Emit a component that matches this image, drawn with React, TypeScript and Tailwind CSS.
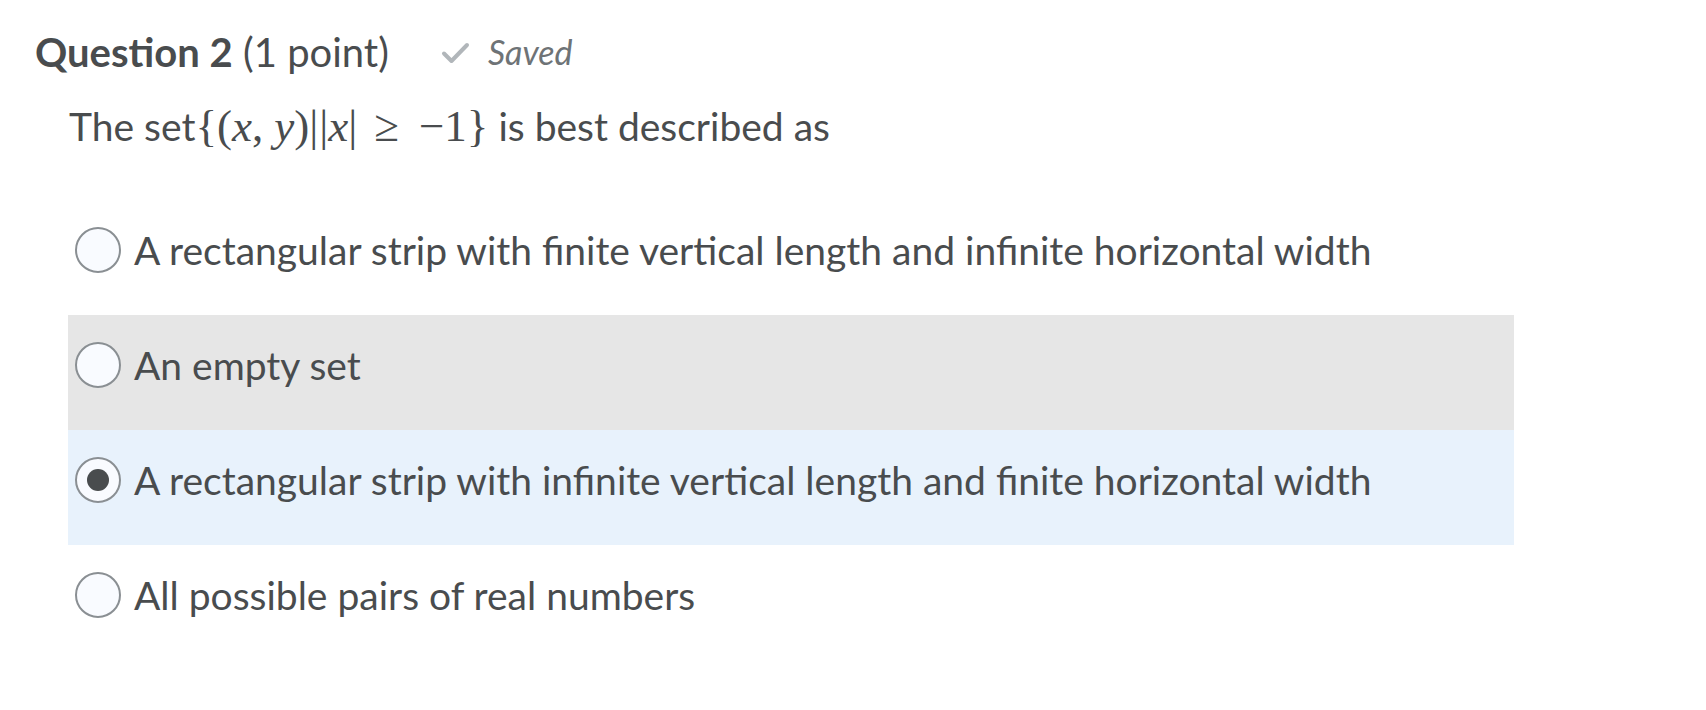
import React from 'react';

interface Choice {
  id: number;
  label: string;
  selected?: boolean;
  hovered?: boolean;
}

const choices: Choice[] = [
  { id: 1, label: 'A rectangular strip with finite vertical length and infinite horizontal width' },
  { id: 2, label: 'An empty set', hovered: true },
  { id: 3, label: 'A rectangular strip with infinite vertical length and finite horizontal width', selected: true },
  { id: 4, label: 'All possible pairs of real numbers' },
];

const Radio: React.FC<{ checked?: boolean }> = ({ checked }) => (
  <span className="flex h-[46px] w-[46px] shrink-0 items-center justify-center rounded-full border-2 border-[#8a8f93] bg-[#f9fbff]">
    {checked && <span className="h-[22px] w-[22px] rounded-full bg-[#494c4e]" />}
  </span>
);

// set-builder expression, laid out roughly like MathJax
const Math: React.FC = () => (
  <span className="text-[45px]" style={{ fontFamily: '"Liberation Serif", "DejaVu Serif", serif' }}>
    {'{'}(<i>x</i>,<span className="ml-[11px]" /><i>y</i>)|<span className="ml-[1px]" />|<i>x</i>|
    <span className="ml-[17px] mr-[20px]">≥</span>−1{'}'}
  </span>
);

export default function App() {
  return (
    <div className="min-h-[710px] bg-white text-[#494c4e]" style={{ fontFamily: 'Lato, "Open Sans", sans-serif' }}>
      <div className="flex items-center pl-[35px] pt-[27px] leading-[50px]">
        <h2 className="text-[40px]">
          <span className="font-bold">Question 2</span> (1 point)
        </h2>
        <div className="ml-[52px] flex items-center gap-[18px] text-[#6e7376]">
          <svg width="29" height="23" viewBox="0 0 29 23" fill="none">
            <path d="M3 12.5 L10.5 20 L26 4" stroke="#b1b6ba" strokeWidth="4" strokeLinecap="round" strokeLinejoin="round" />
          </svg>
          <span className="text-[34px] italic">Saved</span>
        </div>
      </div>

      <p className="ml-[69px] mt-[24px] text-[39px] leading-[50px]">
        The set<Math /> is best described as
      </p>

      <div className="mt-[49px] w-[1446px] ml-[68px]">
        {choices.map((c) => (
          <label
            key={c.id}
            className={`flex h-[115px] items-start gap-[13px] pl-[7px] pt-[27px] ${
              c.hovered ? 'bg-[#e6e6e6]' : c.selected ? 'bg-[#e8f2fc]' : ''
            }`}
          >
            <Radio checked={c.selected} />
            <span className="text-[39px] leading-[46px]">{c.label}</span>
          </label>
        ))}
      </div>
    </div>
  );
}
